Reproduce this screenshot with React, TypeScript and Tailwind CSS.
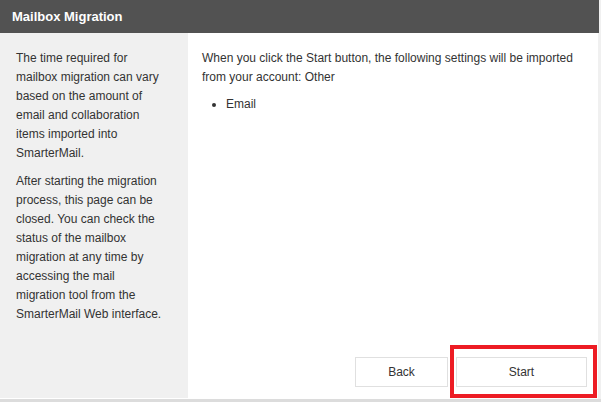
import React from 'react';

// Left-hand explanation text for the migration screen
const INFO = [
  'The time required for mailbox migration can vary based on the amount of email and collaboration items imported into SmarterMail.',
  'After starting the migration process, this page can be closed. You can check the status of the mailbox migration at any time by accessing the mail migration tool from the SmarterMail Web interface.',
];

export default function App() {
  return (
    <div
      className="relative w-[601px] h-[402px] overflow-hidden bg-[#f0f0f0] text-[#333333]"
      style={{ fontFamily: '"Liberation Sans", Arial, sans-serif' }}
    >
      {/* Title bar */}
      <div className="w-[599px] h-[33px] bg-[#525252] flex items-center pl-3">
        <h1 className="text-[13px] font-bold text-white">Mailbox Migration</h1>
      </div>

      {/* Body */}
      <div className="flex w-[598px] h-[366px] bg-white">
        <aside className="w-[188px] h-[365px] shrink-0 bg-[#f0f0f0] pl-4 pr-6 pt-4">
          {INFO.map((text, i) => (
            <p key={i} className={`text-[12px] leading-[19px] ${i > 0 ? 'mt-[9px]' : ''}`}>
              {text}
            </p>
          ))}
        </aside>

        <main className="flex-1 flex flex-col pl-[14px] pr-[11px] pt-4 pb-3">
          <p className="text-[12px] leading-[19px] pr-[3px]">
            When you click the Start button, the following settings will be imported from your
            account: Other
          </p>
          <ul className="list-disc pl-6 mt-2 text-[12px] leading-[19px]">
            <li>Email</li>
          </ul>

          <div className="mt-auto flex justify-end gap-2">
            <button className="w-[93px] h-[30px] border border-[#e0e0e0] bg-white text-[12px] text-[#333333]">
              Back
            </button>
            <button className="w-[131px] h-[30px] border border-[#e0e0e0] bg-white text-[12px] text-[#333333]">
              Start
            </button>
          </div>
        </main>
      </div>

      {/* Bottom edge */}
      <div className="h-[3px] w-full bg-[#dcdcdc]" />

      {/* Red highlight drawn over the Start button */}
      <div className="absolute left-[450px] top-[345px] w-[147px] h-[53px] border-4 border-[#ed1c24] pointer-events-none" />
    </div>
  );
}
